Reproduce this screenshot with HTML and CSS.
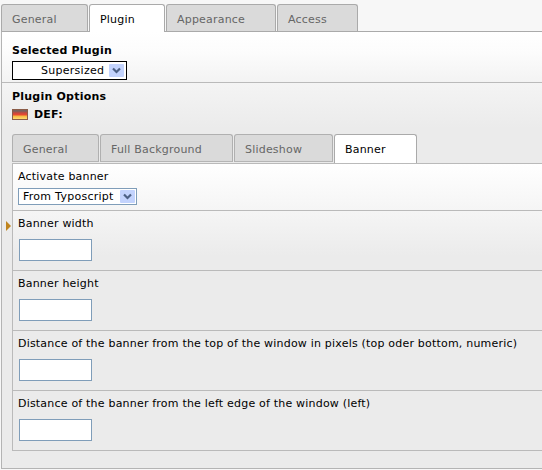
FILE: index.html
```
<!DOCTYPE html>
<html lang="en">
<head>
<meta charset="utf-8">
<title>Plugin</title>
<link rel="stylesheet" href="styles.css">
</head>
<body>
<nav class="tabs outer-tabs">
  <span class="tab general">General</span>
  <span class="tab plugin active">Plugin</span>
  <span class="tab appearance">Appearance</span>
  <span class="tab access">Access</span>
</nav>
<main class="panel">
  <section class="selected">
    <h2>Selected Plugin</h2>
    <div class="select plugin-select"><span>Supersized</span><svg class="arrow" viewBox="0 0 15 13"><rect width="15" height="13" rx="1"/><path d="M4 4.5l3.5 3.5L11 4.5"/></svg></div>
  </section>
  <section class="options">
    <h2>Plugin Options</h2>
    <div class="language"><span class="flag"></span><b>DEF:</b></div>
    <nav class="tabs inner-tabs">
      <span class="tab general">General</span>
      <span class="tab background">Full Background</span>
      <span class="tab slideshow">Slideshow</span>
      <span class="tab banner active">Banner</span>
    </nav>
    <div class="fields">
      <div class="row first"><label>Activate banner</label>
        <div class="select type-select"><span>From Typoscript</span><svg class="arrow" viewBox="0 0 15 13"><rect width="15" height="13" rx="1"/><path d="M4 4.5l3.5 3.5L11 4.5"/></svg></div>
      </div>
      <div class="row shaded"><i class="marker"></i><label>Banner width</label><input type="text"></div>
      <div class="row"><label>Banner height</label><input type="text"></div>
      <div class="row"><label>Distance of the banner from the top of the window in pixels (top oder bottom, numeric)</label><input type="text"></div>
      <div class="row"><label>Distance of the banner from the left edge of the window (left)</label><input type="text"></div>
    </div>
  </section>
</main>
</body>
</html>
```
FILE: styles.css
```
* { box-sizing: border-box; }
body {
  margin: 0;
  height: 470px;
  overflow: hidden;
  background: #f7f7f7;
  color: #000;
  font: 11px/14px Verdana, "DejaVu Sans", sans-serif;
  letter-spacing: 0.2px;
}
.tabs { display: flex; gap: 1px; }
.outer-tabs { padding: 4px 0 0 1px; height: 31px; }
.tab {
  height: 27px;
  padding: 8px 0 0 10px;
  border: 1px solid #aaa;
  border-bottom: 0;
  border-radius: 3px 3px 0 0;
  background: #dadada;
  color: #666;
  white-space: nowrap;
}
.tab.active { background: #fff; color: #000; }
.general { width: 87px; }
.plugin { width: 76px; }
.outer-tabs .active { height: 28px; position: relative; }
.appearance { width: 110px; }
.access { width: 81px; }
.panel {
  height: 438px;
  margin-left: 1px;
  border: solid #b4b4b4;
  border-width: 1px 0 1px 1px;
  border-top-color: #aaa;
}
.selected {
  height: 50px;
  padding: 12px 0 0 10px;
  background: linear-gradient(#fff, #fcfcfc 40%, #f3f3f3);
}
h2 { margin: 0; font-size: 11px; line-height: 14px; letter-spacing: 0.22px; }
.select {
  display: flex;
  align-items: center;
  border: 1px solid #7f9db9;
  background: #fff;
  letter-spacing: 0.27px;
  white-space: nowrap;
}
.select span { flex: 1; padding-top: 1px; }
.arrow { width: 15px; height: 13px; }
.arrow rect { fill: #c3d3fd; }
.arrow path { fill: none; stroke: #4d6185; stroke-width: 2.2; }
.plugin-select { width: 115px; height: 19px; margin-top: 3px; padding: 0 2px 0 28px; border-color: #000; }
.options {
  height: 386px;
  padding: 7px 0 0 10px;
  border-top: 1px solid #bababa;
  background: linear-gradient(#f4f4f4, #ebebeb 45px);
}
.language { display: flex; align-items: center; height: 14px; margin-top: 4px; gap: 6px; }
.flag {
  width: 16px;
  height: 11px;
  margin-top: -1px;
  border: 1px solid #8b5c48;
  background: linear-gradient(#77625f 0 1px, #c9483d 3px, #ed4a31 5px, #f4b840 6px, #ffde72);
}
.inner-tabs { margin-top: 12px; height: 29px; }
.background { width: 133px; }
.slideshow { width: 99px; }
.banner { width: 83px; }
.inner-tabs .tab { border-color: #b0b0b0; height: 28px; border-bottom: 1px solid #b5b5b5; }
.inner-tabs .tab.active { border-bottom: 0; height: 29px; border-color: #aaa; }
.fields { height: 288px; border: solid #bababa; border-width: 1px 0 1px 1px; }
.row { position: relative; height: 60px; padding: 6px 0 0 5px; border-top: 1px solid #bababa; }
.row.first { height: 46px; border-top: 0; background: linear-gradient(#fff, #f5f5f5); }
.row.shaded { background: linear-gradient(#f5f5f5, #ebebeb 45px); }
label { display: block; height: 14px; white-space: nowrap; }
.type-select { width: 119px; height: 17px; margin-top: 4px; padding: 0 1px 0 4px; }
input {
  display: block;
  width: 73px;
  height: 22px;
  margin: 8px 0 0 1px;
  padding: 1px;
  border: 1px solid #7f9db9;
  border-radius: 0;
  background: #fff;
}
.marker {
  position: absolute;
  left: -7px;
  top: 10px;
  border: solid transparent;
  border-width: 5px 0 5px 5px;
  border-left-color: #c08520;
}
```
